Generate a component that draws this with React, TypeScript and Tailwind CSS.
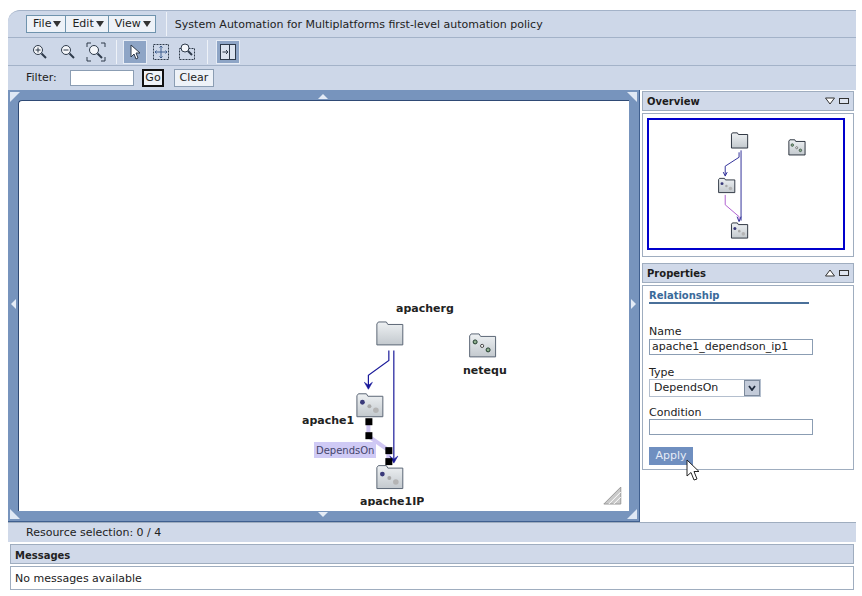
import React from "react";

function Folder({ x, y, w = 27, h = 24, dots, dark }: { x: number; y: number; w?: number; h?: number; dots?: "res" | "equ"; dark?: boolean }) {
  const sx = w / 27;
  const sy = h / 24;
  return (
    <g transform={`translate(${x} ${y}) scale(${sx} ${sy})`}>
      <path d="M0.5 23.5V2.5L2 0.5H10L11.5 3H26.5V23.5Z" fill="url(#folderFill)" stroke={dark ? "#1c2430" : "#5b6675"} strokeWidth={dark ? 1.4 : 1} />
      {dots === "res" && (
        <>
          <circle cx="6" cy="9" r="2.4" fill="#3a3a7a" />
          <circle cx="13" cy="13" r="2" fill="#a9a9a9" />
          <circle cx="19.5" cy="17" r="2.8" fill="#b4b4b4" />
        </>
      )}
      {dots === "equ" && (
        <>
          <circle cx="6" cy="8.5" r="2" fill="#8fb08f" stroke="#1f3a2a" />
          <circle cx="13" cy="12.5" r="1.6" fill="#f4f4f4" stroke="#4a4a4a" />
          <circle cx="19" cy="16.5" r="2" fill="#8fb08f" stroke="#1f3a2a" />
        </>
      )}
    </g>
  );
}

function Corner({ className, rotate }: { className: string; rotate: number }) {
  return (
    <svg viewBox="0 0 10 10" className={`absolute w-2.5 h-2.5 ${className}`} style={{ transform: `rotate(${rotate}deg)` }}>
      <path d="M0 0H10L0 10Z" fill="#dfe8f5" />
    </svg>
  );
}

function Arrow({ className, points }: { className: string; points: string }) {
  return (
    <svg viewBox="0 0 12 12" className={`absolute w-3 h-3 ${className}`}>
      <polygon points={points} fill="#e4ebf6" />
    </svg>
  );
}

function Menu({ label }: { label: string }) {
  return (
    <div className="flex items-center gap-0.5 pl-1.5 pr-1 border-r last:border-r-0 border-[#6f93ad] h-full">
      <span>{label}</span>
      <svg viewBox="0 0 8 6" className="w-2 h-1.5">
        <path d="M0 0H8L4 6Z" fill="#333" />
      </svg>
    </div>
  );
}

function ToolIcon({ children, active }: { children: React.ReactNode; active?: boolean }) {
  return (
    <div className={`w-6 h-6 flex items-center justify-center ${active ? "bg-[#8ea5c6] border border-[#e6ecf5]" : ""}`}>
      <svg viewBox="0 0 20 20" className="w-5 h-5" fill="none" stroke="#2e3a4a" strokeWidth="1">
        {children}
      </svg>
    </div>
  );
}

const lens = (
  <>
    <circle cx="8" cy="8" r="4.5" fill="#f4f6fa" />
    <path d="M11.5 11.5L16 16" strokeWidth="2" />
  </>
);

function PanelHead({ title, up }: { title: string; up?: boolean }) {
  return (
    <div className="h-5 flex items-center justify-between pl-1 pr-1 bg-[#d0d9e9] border border-[#9fadbf] font-bold text-[10px] text-[#1c1c1c]">
      <span>{title}</span>
      <div className="flex items-center gap-1">
        <svg viewBox="0 0 10 7" className="w-2.5 h-2">
          <path d={up ? "M0.5 6.5H9.5L5 0.5Z" : "M0.5 0.5H9.5L5 6.5Z"} fill="#fff" stroke="#333" />
        </svg>
        <svg viewBox="0 0 10 6" className="w-2.5 h-1.5">
          <rect x="0.5" y="0.5" width="9" height="5" fill="#dfe5f0" stroke="#333" />
        </svg>
      </div>
    </div>
  );
}

export default function App() {
  return (
    <div
      className="w-[862px] h-[596px] overflow-hidden bg-white flex flex-col pt-2.5 pl-2 pr-1.5 pb-1.5 text-[11px] text-[#222]"
      style={{ fontFamily: '"DejaVu Sans", sans-serif' }}
    >
      <div className="h-7 flex items-center pl-4.5 bg-[#cdd7e8] border-t border-b border-[#a3b2c8] rounded-tl-xl">
        <div className="flex items-center h-4.5 bg-[#eef2f8] border border-[#6f93ad]">
          <Menu label="File" />
          <Menu label="Edit" />
          <Menu label="View" />
        </div>
        <div className="w-px h-6 bg-[#eef2f8] ml-2.5 mr-2" />
        <span className="pt-0.5">System Automation for Multiplatforms first-level automation policy</span>
      </div>

      <div className="h-7 flex items-center pl-5 bg-[#cdd7e8] border-b border-[#a3b2c8]">
        <div className="flex items-center gap-1">
          <ToolIcon>
            {lens}
            <path d="M5.5 8H10.5M8 5.5V10.5" />
          </ToolIcon>
          <ToolIcon>
            {lens}
            <path d="M5.5 8H10.5" />
          </ToolIcon>
          <ToolIcon>
            <path d="M1 5V1H5M15 1H19V5M1 15V19H5M15 19H19V15" />
            {lens}
          </ToolIcon>
        </div>
        <div className="w-px h-6 bg-[#eef2f8] ml-2 mr-1.5" />
        <div className="flex items-center gap-0.5">
          <ToolIcon active>
            <path d="M6 3V15L9 12L11 17L13 16L11 11H15Z" fill="#fff" />
          </ToolIcon>
          <ToolIcon>
            <rect x="2.5" y="2.5" width="15" height="15" strokeDasharray="2 1" />
            <path d="M10 4V16M4 10H16M8.5 5.5L10 4L11.5 5.5M8.5 14.5L10 16L11.5 14.5M5.5 8.5L4 10L5.5 11.5M14.5 8.5L16 10L14.5 11.5" stroke="#3f5f8f" />
          </ToolIcon>
          <ToolIcon>
            <rect x="2.5" y="6.5" width="15" height="11" strokeDasharray="2 1" />
            <circle cx="8" cy="6" r="4" fill="#f4f6fa" />
            <path d="M11 9L15 13" strokeWidth="2" />
          </ToolIcon>
        </div>
        <div className="w-px h-6 bg-[#eef2f8] mx-2" />
        <ToolIcon active>
          <rect x="2.5" y="2.5" width="15" height="15" fill="#dbe3ef" />
          <path d="M11.5 2.5V17.5M4.5 10H10M8 8L10 10L8 12" />
        </ToolIcon>
      </div>

      <div className="h-6 flex items-center pl-4.5 bg-[#cdd7e8]">
        <span className="w-11">Filter:</span>
        <div className="w-16 h-4 bg-white border border-[#8b9db3]" />
        <div className="ml-2 w-5.5 h-4.5 flex items-center justify-center bg-[#eef2f8] border-2 border-[#111]">Go</div>
        <div className="ml-2.5 w-10 h-4.5 flex items-center justify-center bg-[#eef2f8] border border-[#8b9db3]">Clear</div>
      </div>

      <div className="flex-1 flex min-h-0">
        <div className="relative w-[632px] p-2.5 bg-[#7794bd] border-r border-[#3f5f8f] border-b border-b-[#3f5f8f]">
          <Corner className="top-0.5 left-0.5" rotate={0} />
          <Corner className="top-0.5 right-0.5" rotate={90} />
          <Corner className="bottom-0.5 right-0.5" rotate={180} />
          <Corner className="bottom-0.5 left-0.5" rotate={270} />
          <Arrow className="top-0 left-[309px]" points="1,9 11,9 6,4" />
          <Arrow className="bottom-0 left-[309px]" points="1,3 11,3 6,8" />
          <Arrow className="left-0 top-52" points="8,1 8,11 3,6" />
          <Arrow className="right-0 top-52" points="4,1 4,11 9,6" />

          <div className="relative w-full h-full bg-white border-t border-l border-[#2f4a75] rounded-tl-sm overflow-hidden">
            <svg viewBox="19 100 611 411" className="absolute inset-0 w-full h-full">
              <defs>
                <linearGradient id="folderFill" x1="0" y1="0" x2="0" y2="1">
                  <stop offset="0" stopColor="#eef1f3" />
                  <stop offset="1" stopColor="#c3c9ce" />
                </linearGradient>
              </defs>
              <Folder x={377} y={321} />
              <Folder x={470} y={333} dots="equ" />
              <Folder x={357} y={393} dots="res" />
              <Folder x={377} y={465} dots="res" />
              <path d="M369 424L369 436L389 450V462" fill="none" stroke="#cfc6f3" strokeWidth="4" />
              <path d="M389.5 350V360L369 375V388M394.5 350V462" fill="none" stroke="#1a1a9a" strokeWidth="1.2" />
              <path d="M365 382L369 389L373 382L369 385ZM390.5 456L394.5 463L398.5 456L394.5 459Z" fill="#1a1a9a" stroke="#1a1a9a" strokeWidth="0.6" />
              <rect x="366" y="418" width="7" height="7" fill="#000" />
              <rect x="366" y="432" width="7" height="7" fill="#000" />
              <rect x="386" y="447" width="7" height="7" fill="#000" />
              <rect x="386" y="458" width="7" height="7" fill="#000" />
              <path d="M605 504H622V487Z" fill="#c9c9c9" stroke="#9a9a9a" />
              <path d="M610 504L622 492M615 504L622 497" stroke="#fff" />
            </svg>
            <span className="absolute left-[377px] top-[200px] font-bold">apacherg</span>
            <span className="absolute left-[444px] top-[262px] font-bold">netequ</span>
            <span className="absolute left-[283px] top-[312px] font-bold">apache1</span>
            <span className="absolute left-[295px] top-[341px] h-4 px-0.5 flex items-center bg-[#cfcaf5] text-[10px] text-[#45456b]">DependsOn</span>
            <span className="absolute left-[341px] top-[393px] h-3 overflow-hidden font-bold leading-4">apache1IP</span>
          </div>
        </div>

        <div className="relative flex-1 flex flex-col px-0.5 pt-px">
          <PanelHead title="Overview" />
          <div className="mt-0.5 h-36 flex bg-white border border-[#9fadbf] p-1 pr-2 pb-1.5">
            <div className="flex-1 border-2 border-[#0000cc]">
              <svg viewBox="648 120 196 128" className="w-full h-full">
                <Folder x={731} y={132} w={17} h={16} dark />
                <Folder x={789} y={139} w={17} h={16} dots="equ" dark />
                <Folder x={718} y={178} w={17} h={15} dots="res" dark />
                <Folder x={731} y={223} w={17} h={16} dots="res" dark />
                <path d="M725 195V205L739 217V221" fill="none" stroke="#b060d0" />
                <path d="M739 152V157L725 166V175M741 150V221" fill="none" stroke="#33339a" />
                <path d="M723 172L725 176L727 172M737 217L739 222L741 217" fill="none" stroke="#33339a" />
              </svg>
            </div>
          </div>

          <div className="mt-1.5">
            <PanelHead title="Properties" up />
          </div>
          <div className="mt-0.5 bg-white border border-[#9fadbf] pl-1.5 pb-1 flex flex-col items-start">
            <div className="w-40 mt-1 leading-3 border-b-2 border-[#4a7099] font-bold text-[10px] text-[#3a6a9a]">Relationship</div>
            <label className="mt-5.5 leading-3">Name</label>
            <div className="mt-px w-41 h-4 px-0.5 flex items-center bg-white border border-[#8b9db3]">apache1_dependson_ip1</div>
            <label className="mt-3 leading-3">Type</label>
            <div className="w-28 h-4.5 pl-1 flex items-center justify-between bg-white border border-[#b4bfce]">
              <span>DependsOn</span>
              <div className="w-4 h-4 flex items-center justify-center bg-[#c3cbd9] border border-[#7d8a9c]">
                <svg viewBox="0 0 8 6" className="w-2 h-1.5">
                  <path d="M1 1L4 5L7 1" fill="none" stroke="#1e2a3c" strokeWidth="1.8" />
                </svg>
              </div>
            </div>
            <label className="mt-2.5 leading-3">Condition</label>
            <div className="w-41 h-4 bg-white border border-[#8b9db3]" />
            <div className="mt-3 w-11 h-4.5 flex items-center justify-center bg-[#6f8fc0] text-[#e6ecf7]">Apply</div>
          </div>
          <svg viewBox="0 0 14 24" className="absolute left-[46px] top-[369px] w-3.5 h-6">
            <path d="M1 1V17L5 13.5L8 21L11 20L8 12.5H13Z" fill="#fff" stroke="#222" />
          </svg>
        </div>
      </div>

      <div className="h-5 flex items-center pl-4.5 pt-0.5 bg-[#d0d9e9] border-t border-[#9fadbf]">Resource selection: 0 / 4</div>
      <div className="mt-0.5 mx-0.5 h-5 flex items-center pl-1 pt-0.5 bg-[#d0d9e9] border border-[#9fadbf] font-bold text-[10px]">Messages</div>
      <div className="mt-0.5 mx-0.5 h-6 flex items-center pl-1 pt-0.5 bg-white border border-[#9fadbf]">No messages available</div>
    </div>
  );
}
